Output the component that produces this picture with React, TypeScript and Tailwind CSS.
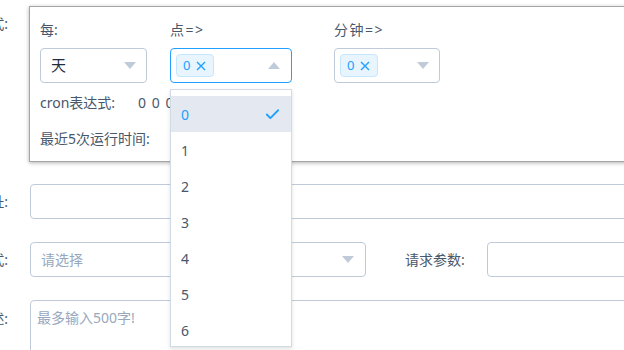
import { Check } from "lucide-react";

const font = { fontFamily: '"Noto Sans", "Noto Sans CJK SC", sans-serif' };

function Caret({ up = false }: { up?: boolean }) {
  return (
    <svg width="12" height="7" viewBox="0 0 12 7" className="shrink-0">
      {up ? <path d="M0 7 L6 0 L12 7 Z" fill="#bfcbd9" /> : <path d="M0 0 L12 0 L6 7 Z" fill="#bfcbd9" />}
    </svg>
  );
}

function Tag() {
  return (
    <span className="flex items-center h-[23px] pl-[6px] pr-[7px] gap-[6px] rounded-[4px] border border-[#c5e6ff] bg-[#e8f5ff] text-[#20a0ff] text-[13px]">
      <span>0</span>
      <svg width="10" height="10" viewBox="0 0 10 10">
        <path d="M1 1 L9 9 M9 1 L1 9" stroke="#20a0ff" strokeWidth="1.4" />
      </svg>
    </span>
  );
}

function RowLabel({ text }: { text: string }) {
  return (
    <div className="w-[8px] shrink-0 overflow-hidden flex justify-end">
      <span className="whitespace-nowrap text-[14px] text-[#48576a]">{text}</span>
    </div>
  );
}

const hours = ["0", "1", "2", "3", "4", "5", "6"];

export default function App() {
  return (
    <div className="w-[624px] h-[350px] overflow-hidden bg-white relative" style={font}>
      {/* cron panel row */}
      <div className="flex pt-[6px]">
        <div className="pt-[7px]">
          <RowLabel text="执行方式:" />
        </div>
        <div className="ml-[21px] w-[620px] shrink-0 h-[156px] border border-[#a5a5a5] shadow-[0_1px_4px_rgba(0,0,0,0.3)] pl-[10px] pt-[14px] text-[14px] text-[#48576a]">
          <div className="flex">
            <div className="w-[107px]">
              <div className="h-[18px] leading-[18px]">每:</div>
              <div className="mt-[9px] h-[35px] rounded-[4px] border border-[#bfcbd9] flex items-center justify-between pl-[10px] pr-[10px] text-[#1f2d3d] text-[15px]">
                <span>天</span>
                <Caret />
              </div>
            </div>
            <div className="ml-[23px] w-[122px] relative">
              <div className="h-[18px] leading-[18px] tracking-[1.5px]">点=&gt;</div>
              <div className="mt-[9px] h-[35px] rounded-[4px] border border-[#20a0ff] flex items-center justify-between pl-[5px] pr-[11px]">
                <Tag />
                <Caret up />
              </div>
              <div className="absolute left-0 top-[68px] w-[122px] h-[258px] bg-white border border-[#d1dbe5] shadow-[0_2px_4px_rgba(0,0,0,0.12)] py-[6px] z-10">
                {hours.map((h, i) => (
                  <div
                    key={h}
                    className={
                      i === 0
                        ? "h-[36px] flex items-center justify-between pl-[10px] pr-[10px] bg-[#e4e8f1] text-[#20a0ff]"
                        : "h-[36px] flex items-center pl-[10px] text-[#48576a]"
                    }
                  >
                    <span>{h}</span>
                    {i === 0 && <Check size={17} strokeWidth={2.6} color="#20a0ff" />}
                  </div>
                ))}
              </div>
            </div>
            <div className="ml-[42px] w-[106px]">
              <div className="h-[18px] leading-[18px] tracking-[1.5px]">分钟=&gt;</div>
              <div className="mt-[9px] h-[35px] rounded-[4px] border border-[#bfcbd9] flex items-center justify-between pl-[5px] pr-[10px]">
                <Tag />
                <Caret />
              </div>
            </div>
          </div>
          <div className="mt-[11px] h-[18px] leading-[18px] flex">
            <span>cron表达式:</span>
            <span className="ml-[23px] tracking-[1px]">0 0 0 * * ?</span>
          </div>
          <div className="mt-[18px] h-[18px] leading-[18px]">最近5次运行时间:</div>
        </div>
      </div>

      {/* url row */}
      <div className="flex items-center mt-[22px]">
        <RowLabel text="请求地址:" />
        <div className="ml-[22px] w-[620px] shrink-0 h-[35px] rounded-[4px] border border-[#bfcbd9]" />
      </div>

      {/* method row */}
      <div className="flex items-center mt-[23px] text-[14px]">
        <RowLabel text="请求方式:" />
        <div className="ml-[22px] w-[336px] shrink-0 h-[35px] rounded-[4px] border border-[#bfcbd9] flex items-center justify-between pl-[10px] pr-[11px] text-[#97a8be]">
          <span>请选择</span>
          <Caret />
        </div>
        <span className="ml-[39px] w-[82px] shrink-0 text-[#48576a]">请求参数:</span>
        <div className="w-[200px] shrink-0 h-[35px] rounded-[4px] border border-[#bfcbd9]" />
      </div>

      {/* desc row */}
      <div className="flex mt-[23px] text-[14px]">
        <div className="pt-[8px]">
          <RowLabel text="任务描述:" />
        </div>
        <div className="ml-[22px] w-[620px] shrink-0 h-[80px] rounded-[4px] border border-[#bfcbd9] pl-[6px] pt-[7px] text-[#97a8be] leading-[20px]">
          最多输入500字!
        </div>
      </div>
    </div>
  );
}
